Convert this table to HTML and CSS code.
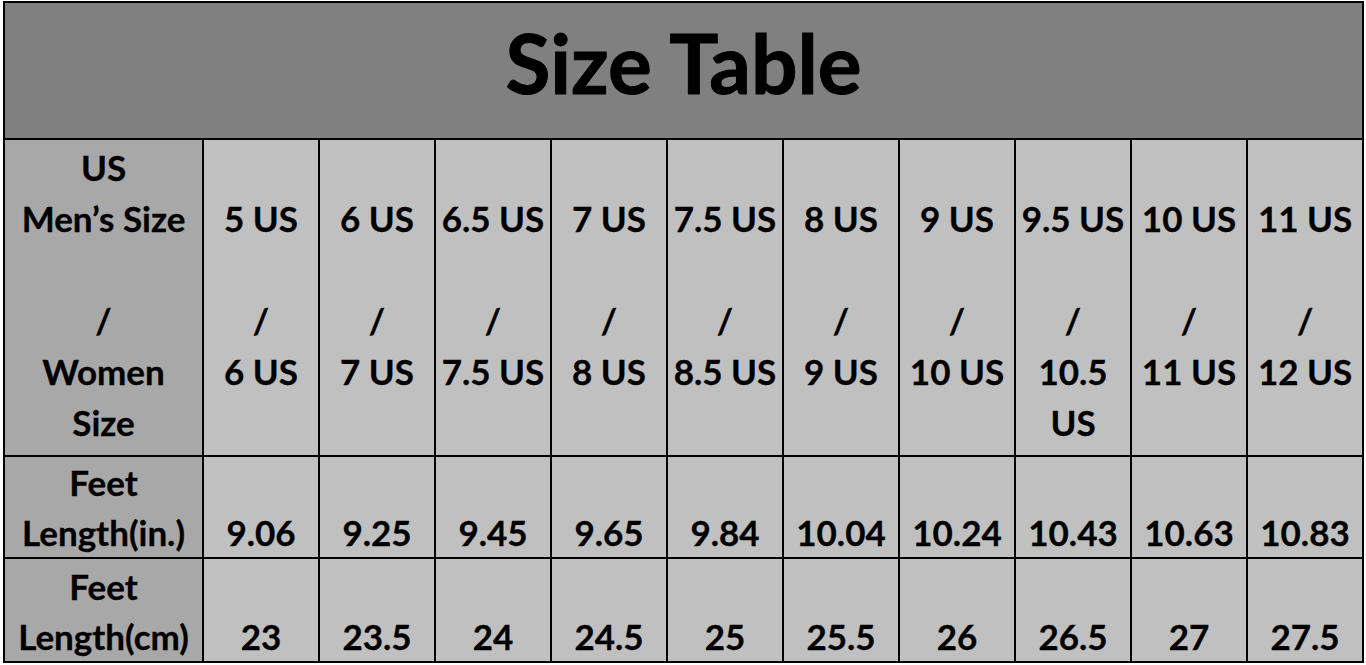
FILE: index.html
```html
<!DOCTYPE html>
<html>
<head>
<meta charset="utf-8">
<link rel="stylesheet" href="styles.css">
</head>
<body>
<table class="size-table">
  <colgroup>
    <col class="col-label">
    <col span="10" class="col-data">
  </colgroup>
  <tr class="row-title">
    <th colspan="11" class="title">Size Table</th>
  </tr>
  <tr class="row-size">
    <th class="label">US<br>Men’s Size<br><br>/<br>Women<br>Size</th>
    <td>5 US<br><br>/<br>6 US</td>
    <td>6 US<br><br>/<br>7 US</td>
    <td>6.5 US<br><br>/<br>7.5 US</td>
    <td>7 US<br><br>/<br>8 US</td>
    <td>7.5 US<br><br>/<br>8.5 US</td>
    <td>8 US<br><br>/<br>9 US</td>
    <td>9 US<br><br>/<br>10 US</td>
    <td>9.5 US<br><br>/<br>10.5<br>US</td>
    <td>10 US<br><br>/<br>11 US</td>
    <td>11 US<br><br>/<br>12 US</td>
  </tr>
  <tr class="row-len row-in">
    <th class="label">Feet<br>Length(in.)</th>
    <td>9.06</td>
    <td>9.25</td>
    <td>9.45</td>
    <td>9.65</td>
    <td>9.84</td>
    <td>10.04</td>
    <td>10.24</td>
    <td>10.43</td>
    <td>10.63</td>
    <td>10.83</td>
  </tr>
  <tr class="row-len row-cm">
    <th class="label">Feet<br>Length(cm)</th>
    <td>23</td>
    <td>23.5</td>
    <td>24</td>
    <td>24.5</td>
    <td>25</td>
    <td>25.5</td>
    <td>26</td>
    <td>26.5</td>
    <td>27</td>
    <td>27.5</td>
  </tr>
</table>
</body>
</html>
```

FILE: styles.css
```css
html, body {
  margin: 0;
  padding: 0;
  background: #ffffff;
}

body {
  padding: 1px 0 0 3px;
}

.size-table {
  border-collapse: collapse;
  table-layout: fixed;
  width: 1360px;
  font-family: Lato, "Open Sans", sans-serif;
  font-weight: 700;
  color: #000;
  border: 2px solid #000;
}

.col-label { width: 199px; }
.col-data { width: 116px; }

.size-table th,
.size-table td {
  border: 2px solid #000;
  padding: 0;
  text-align: center;
  white-space: nowrap;
  overflow: hidden;
  -webkit-text-stroke: 0.3px #000;
}

.row-title { height: 137px; }
.row-size { height: 317px; }
.row-in { height: 102px; }
.row-cm { height: 104px; }

.size-table .title {
  background: #808080;
  font-size: 82px;
  line-height: 100px;
  padding-top: 9px;
  vertical-align: top;
  overflow: visible;
  -webkit-text-stroke: 1px #000;
}

.row-size th,
.row-size td {
  font-size: 35px;
  line-height: 51px;
  vertical-align: top;
  background: #c0c0c0;
}

.row-size td {
  padding-top: 53px;
}

.row-size th {
  padding-top: 2px;
}

.label {
  background: #a8a8a8 !important;
}

.row-len th,
.row-len td {
  font-size: 35px;
  line-height: 50px;
  vertical-align: bottom;
  background: #c0c0c0;
}
```
